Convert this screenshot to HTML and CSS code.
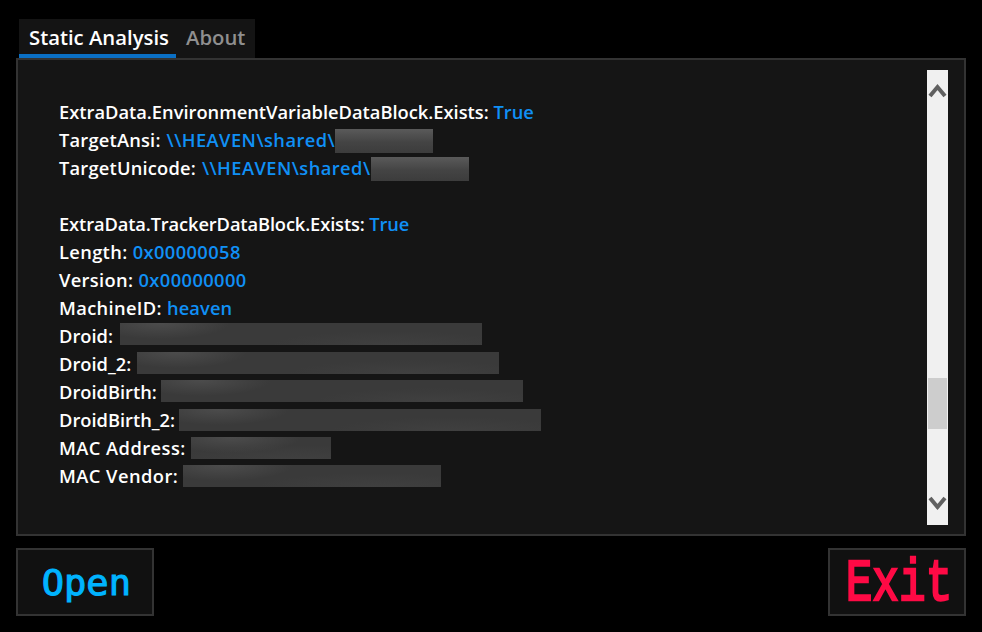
FILE: index.html
```html
<!DOCTYPE html>
<html lang="en">
<head>
<meta charset="utf-8">
<title>Static Analysis</title>
<link rel="stylesheet" href="styles.css">
</head>
<body>
<div class="app">
  <div class="tabs">
    <div class="tab active">Static Analysis</div>
    <div class="tab">About</div>
  </div>
  <div class="panel">
    <div class="content">
      <div class="line">ExtraData.EnvironmentVariableDataBlock.Exists: <span class="val">True</span></div>
      <div class="line l-a">TargetAnsi: <span class="val v-path">\\HEAVEN\shared\</span><span class="redact r-ansi"></span></div>
      <div class="line l-a">TargetUnicode: <span class="val v-path">\\HEAVEN\shared\</span><span class="redact r-ansi"></span></div>
      <div class="line"></div>
      <div class="line l-tight">ExtraData.TrackerDataBlock.Exists: <span class="val">True</span></div>
      <div class="line l-b">Length: <span class="val v-hex">0x00000058</span></div>
      <div class="line l-b">Version: <span class="val v-hex">0x00000000</span></div>
      <div class="line l-b">MachineID: <span class="val v-word">heaven</span></div>
      <div class="line">Droid: <span class="redact r-droid r-1"></span></div>
      <div class="line">Droid_2: <span class="redact r-droid r-2"></span></div>
      <div class="line">DroidBirth: <span class="redact r-droid r-3"></span></div>
      <div class="line">DroidBirth_2: <span class="redact r-droid r-4"></span></div>
      <div class="line l-c">MAC Address: <span class="redact r-mac"></span></div>
      <div class="line l-c">MAC Vendor: <span class="redact r-vendor"></span></div>
    </div>
    <div class="scrollbar">
      <svg class="arrow" width="21" height="30" viewBox="0 0 21 30"><path d="M3 26 L10.500 17 L18 26" fill="none" stroke="#606060" stroke-width="4"/></svg>
      <div class="track"><div class="thumb"></div></div>
      <svg class="arrow" width="21" height="30" viewBox="0 0 21 30"><path d="M3 3 L10.500 12 L18 3" fill="none" stroke="#606060" stroke-width="4"/></svg>
    </div>
  </div>
  <div class="actions">
    <div class="btn open"><span class="btn-label">Open</span></div>
    <div class="btn exit"><span class="btn-label">Exit</span></div>
  </div>
</div>
</body>
</html>
```
FILE: styles.css
```css
* { box-sizing: border-box; }
html, body { margin: 0; padding: 0; background: #000; }
body { width: 982px; height: 632px; overflow: hidden; font-family: "Open Sans", "Noto Sans", sans-serif; }
.app { padding: 19px 16px 0; display: flex; flex-direction: column; }
.tabs { display: flex; align-self: flex-start; margin-left: 3px; height: 39px; background: #141414; }
.tab { padding: 0 10px; font-size: 20.300px; font-weight: 600; line-height: 37px; color: #8f8f8f; white-space: nowrap; }
.tab.active { width: 157px; color: #fff; border-bottom: 4px solid #0a6fc4; }
.panel { display: flex; height: 478px; border: 2px solid #333; background: #151515; padding: 10px 16px 9px 0; }
.content { flex: 1; padding: 28px 0 0 41px; color: #fff; font-size: 18.300px; font-weight: 600; }
.line { display: flex; height: 28px; line-height: 28px; white-space: pre; align-items: center; }
.l-tight { letter-spacing: -.12px; }
.l-a { letter-spacing: .2px; }
.l-b { letter-spacing: .35px; }
.l-c { letter-spacing: .45px; }
.val { color: #1090f5; }
.v-path { letter-spacing: .45px; margin-left: 1px; }
.v-hex { letter-spacing: .4px; }
.v-word { letter-spacing: .1px; }
.redact {
  display: block; height: 22px;
  background:
    radial-gradient(ellipse 70px 16px at 40px 0, rgba(110,110,110,.35), transparent),
    radial-gradient(ellipse 120px 14px at 75% 100%, rgba(90,90,90,.18), transparent),
    #3a3a3a;
}
.r-ansi { width: 98px; height: 24px; margin-top: 2px; background: linear-gradient(#5a5a5a, #444 55%, #3c3c3c); }
.r-droid { width: 362px; }
.r-1 { margin: 0 0 4px 2px; }
.r-2 { margin: 0 0 2px 1px; }
.r-3 { margin: 0 0 2px -1px; }
.r-4 { margin-left: -1px; }
.r-mac { width: 140px; }
.r-vendor { width: 258px; }
.scrollbar { width: 21px; background: #f0f0f0; display: flex; flex-direction: column; }
.arrow { display: block; flex: none; }
.track { flex: 1; padding: 278px 1px 0; }
.thumb { height: 51px; background: #cdcdcd; }
.actions { display: flex; justify-content: space-between; margin-top: 12px; }
.btn { width: 138px; height: 68px; border: 2px solid #333; background: #111; display: flex; align-items: center; justify-content: center; }
.btn-label { display: block; font-weight: 400; white-space: nowrap; }
.open { color: #00b4ff; font-family: "DejaVu Sans Mono", monospace; font-size: 36px; padding-left: 3px; }
.open .btn-label { -webkit-text-stroke: 1px #00b4ff; transform: scaleX(1.03); }
.exit { color: #ff0a45; font-family: "Liberation Mono", monospace; font-size: 60px; padding: 4px 0 0 4px; }
.exit .btn-label { margin: 0 -19px; -webkit-text-stroke: 2.500px #ff0a45; transform: scaleX(.74); }
```
